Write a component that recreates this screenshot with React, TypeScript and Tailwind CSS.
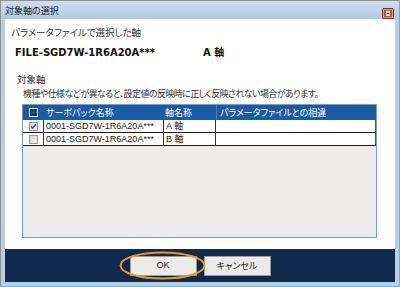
import React from "react";

const jp = "font-['Noto_Sans_CJK_JP','Noto_Sans',sans-serif] [font-feature-settings:'palt']";
const lat = "font-['Liberation_Sans','Noto_Sans_CJK_JP',sans-serif]";

function CloseBtn() {
  return (
    <svg width="12" height="11" viewBox="0 0 12 11">
      <rect x="0.5" y="0.5" width="11" height="10" rx="1" fill="#b9553f" stroke="#7b2d20" />
      <rect x="1.5" y="1.5" width="9" height="8" fill="none" stroke="#e09a85" />
      <rect x="4" y="3" width="4" height="5" fill="#f4e6df" />
      <rect x="4.5" y="5" width="3" height="1" fill="#5a2a20" />
    </svg>
  );
}

function Check({ checked }: { checked: boolean }) {
  return (
    <svg width="9" height="9" viewBox="0 0 9 9">
      <defs>
        <linearGradient id="g" x1="0" y1="0" x2="1" y2="1">
          <stop offset="0" stopColor="#d2d2d2" />
          <stop offset="1" stopColor="#f6f6f6" />
        </linearGradient>
      </defs>
      <rect x="0.5" y="0.5" width="8" height="8" fill="#e4e4e4" stroke="#9a9a9a" />
      <rect x="1.5" y="1.5" width="6" height="6" fill="url(#g)" />
      {checked && <path d="M2 4.5 L3.6 6.3 L7 2.3" fill="none" stroke="#2a4e9a" strokeWidth="1.4" />}
    </svg>
  );
}

export default function App() {
  return (
    <div className={`w-[400px] h-[287px] flex flex-col bg-[#b8cfe7] border-l border-t border-l-[#8d9196] border-t-[#8d8f91] border-r border-b border-r-[#45c3ea] border-b-[#45c3ea] ${jp}`}>
      <div className="h-[18px] shrink-0 flex items-center justify-between pl-[4px] pr-[5px] bg-[linear-gradient(#d0deee,#b1c9e4)]">
        <span className="text-[9px] leading-[12px] text-[#222] mt-[2px]">対象軸の選択</span>
        <div className="mt-[6px]"><CloseBtn /></div>
      </div>
      <div className="flex-1 flex flex-col px-[4px] pb-[4px]">
        <div className="h-[230px] bg-white flex flex-col pt-[6px] text-[#333]">
          <div className="h-[14px] leading-[14px] text-[9.5px] pl-[6px]">パラメータファイルで選択した軸</div>
          <div className="h-[14px] leading-[14px] font-bold text-[#111] mt-[7px] flex">
            <span className="pl-[10px] w-[198px] font-['DejaVu_Sans',sans-serif] text-[10px]">FILE-SGD7W-1R6A20A***</span>
            <span className="font-['DejaVu_Sans','Noto_Sans_CJK_JP',sans-serif] text-[10px]">A 軸</span>
          </div>
          <div className="h-[14px] leading-[14px] text-[9.5px] pl-[12px] mt-[12px]">対象軸</div>
          <div className="h-[14px] leading-[14px] text-[9px] tracking-[-0.6px] pl-[18px] mt-[1px]">機種や仕様などが異なると、設定値の反映時に正しく反映されない場合があります。</div>
          <div className="mt-[3px] ml-[17px] w-[355px] h-[134px] border border-[#7e9cbd] bg-[#edecea] flex flex-col">
            <div className="h-[15px] bg-[#1b5aa5] grid grid-cols-[21px_120px_52px_160px] text-white text-[9px] leading-[15px]">
              <div className="flex items-center justify-center">
                <div className="w-[9px] h-[9px] border border-[#e8eef6] bg-[#17448a] p-[1px]">
                  <div className="w-full h-full bg-[#254f95] border border-[#0f3370]" />
                </div>
              </div>
              <div className="pl-[2px]">サーボパック名称</div>
              <div className="pl-[1px]">軸名称</div>
              <div className="pl-[3px] border-l border-[#4d7ab5]">パラメータファイルとの相違</div>
            </div>
            {[{ c: true, a: "A 軸" }, { c: false, a: "B 軸" }].map((r, i) => (
              <div key={i} className={`h-[13px] bg-white grid grid-cols-[21px_120px_52px_160px] border-b border-[#1a1a1a] text-[9px] leading-[12px] text-[#222] ${lat}`}>
                <div className="flex items-center justify-center border-r border-[#333]"><Check checked={r.c} /></div>
                <div className="pl-[2px] border-r border-[#333]">0001-SGD7W-1R6A20A***</div>
                <div className="pl-[2px] border-r border-[#333]">{r.a}</div>
                <div className="border-r border-[#555]" />
              </div>
            ))}
          </div>
        </div>
        <div className="h-[33px] bg-[#0f2a4c] flex justify-center gap-[7px] pt-[7px]">
          <div className="relative w-[67px] h-[20px]">
            <div className={`w-full h-full bg-[#ecebe9] border border-[#9a9a9a] flex items-center justify-center text-[9px] text-[#222] ${lat}`}>OK</div>
            <svg className="absolute left-[-11px] top-[-5px]" width="87" height="29" viewBox="0 0 87 29">
              <ellipse cx="43.5" cy="14.5" rx="42" ry="13" fill="none" stroke="#f0951f" strokeWidth="2" />
            </svg>
          </div>
          <div className="w-[67px] h-[20px] bg-[#ecebe9] border border-[#9a9a9a] flex items-center justify-center text-[9px] text-[#222]">キャンセル</div>
        </div>
      </div>
    </div>
  );
}
